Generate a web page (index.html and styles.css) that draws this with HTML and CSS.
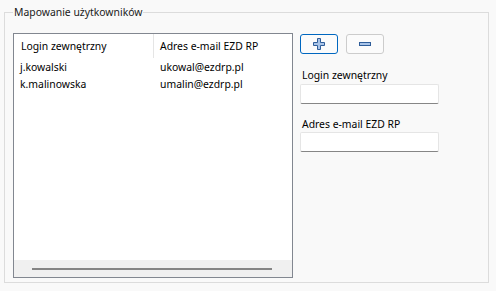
FILE: index.html
```html
<!DOCTYPE html>
<html lang="pl">
<head>
  <meta charset="UTF-8" />
  <title>Mapowanie użytkowników</title>
  <link rel="stylesheet" href="styles.css">
</head>
<body>

  <fieldset class="group">
    <legend>Mapowanie użytkowników</legend>

    <div class="group-body">
      <div class="list-view">
        <div class="list-header">
          <div class="col col-login">Login zewnętrzny</div>
          <div class="col col-email">Adres e-mail EZD RP</div>
        </div>
        <div class="list-rows">
          <div class="list-row">
            <div class="col col-login">j.kowalski</div>
            <div class="col col-email">ukowal@ezdrp.pl</div>
          </div>
          <div class="list-row">
            <div class="col col-login">k.malinowska</div>
            <div class="col col-email">umalin@ezdrp.pl</div>
          </div>
        </div>
        <div class="h-scroll">
          <div class="h-thumb"></div>
        </div>
      </div>

      <div class="side-panel">
        <div class="button-row">
          <button class="icon-button focused" title="Dodaj">
            <svg width="12" height="12" viewBox="0 0 12 12">
              <path d="M4.5 0.5h3v4h4v3h-4v4h-3v-4h-4v-3h4z" fill="#a9c4e8" stroke="#2f5d99" stroke-width="1"/>
            </svg>
          </button>
          <button class="icon-button" title="Usuń">
            <svg width="12" height="4" viewBox="0 0 12 4">
              <rect x="0.5" y="0.5" width="11" height="3" fill="#a9c4e8" stroke="#2f5d99" stroke-width="1"/>
            </svg>
          </button>
        </div>

        <label class="field-label" for="login">Login zewnętrzny</label>
        <input class="text-box" type="text" id="login" />

        <label class="field-label second" for="email">Adres e-mail EZD RP</label>
        <input class="text-box" type="text" id="email" />
      </div>
    </div>
  </fieldset>

</body>
</html>
```

FILE: styles.css
```css
body {
  margin: 0;
  background-color: #f9f9f9;
  font-family: 'Noto Sans', sans-serif;
  font-size: 10.4px;
  color: #000;
}

.group {
  box-sizing: border-box;
  margin: 4px 0 0 4px;
  width: 485px;
  height: 279px;
  padding: 0 8px 0 8px;
  border: 1px solid #dcdcdc;
}

.group legend {
  padding: 0 1px;
  line-height: 16px;
  color: #1a1a1a;
}

.group-body {
  display: flex;
  gap: 7px;
  margin-top: 13px;
}

.list-view {
  box-sizing: border-box;
  width: 280px;
  height: 245px;
  border: 1px solid #828790;
  background: white;
  display: flex;
  flex-direction: column;
}

.list-header,
.list-row {
  display: flex;
}

.list-header {
  height: 24px;
  align-items: center;
}

.list-header .col-login {
  border-right: 1px solid #e5e5e5;
  height: 24px;
  line-height: 24px;
}

.list-rows {
  flex: 1;
  padding-top: 1px;
}

.list-row {
  height: 17px;
  line-height: 17px;
}

.col {
  white-space: nowrap;
}

.col-login {
  width: 140px;
  padding-left: 7px;
  box-sizing: border-box;
}

.col-email {
  padding-left: 6px;
}

.list-row .col-login {
  padding-left: 6px;
  width: 140px;
}

.h-scroll {
  height: 17px;
  background: #f0f0f0;
  display: flex;
  align-items: center;
  padding-left: 18px;
}

.h-thumb {
  width: 240px;
  height: 2px;
  background: #858585;
}

.side-panel {
  display: flex;
  flex-direction: column;
  align-items: flex-start;
  padding-top: 1px;
}

.button-row {
  display: flex;
  gap: 8px;
}

.icon-button {
  box-sizing: border-box;
  width: 38px;
  height: 20px;
  padding: 0;
  border: 1px solid #cccccc;
  border-radius: 3px;
  background: #fbfbfb;
  display: flex;
  align-items: center;
  justify-content: center;
}

.icon-button.focused {
  border-color: #0067c0;
}

.field-label {
  margin: 14px 0 2px 2px;
  line-height: 14px;
}

.field-label.second {
  margin-top: 13px;
  margin-bottom: 1px;
}

.text-box {
  box-sizing: border-box;
  width: 139px;
  height: 20px;
  margin: 0;
  border: 1px solid #e5e5e5;
  border-bottom: 1px solid #868686;
  border-radius: 2px;
  background: white;
}
```
